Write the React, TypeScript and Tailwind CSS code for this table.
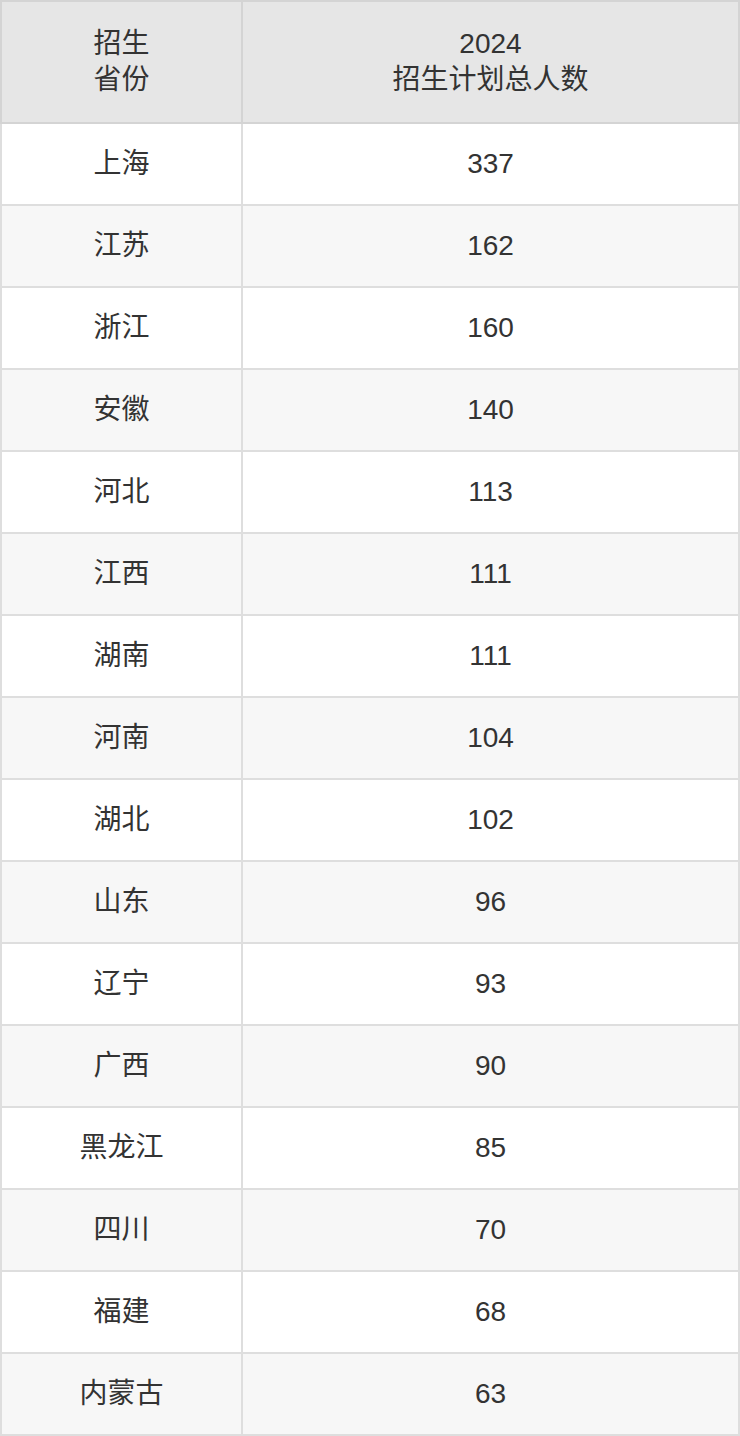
const rows: [string, number][] = [
  ["上海", 337],
  ["江苏", 162],
  ["浙江", 160],
  ["安徽", 140],
  ["河北", 113],
  ["江西", 111],
  ["湖南", 111],
  ["河南", 104],
  ["湖北", 102],
  ["山东", 96],
  ["辽宁", 93],
  ["广西", 90],
  ["黑龙江", 85],
  ["四川", 70],
  ["福建", 68],
  ["内蒙古", 63],
];

export default function App() {
  return (
    <div
      className="w-[740px] bg-white text-[#333333]"
      style={{ fontFamily: '"Liberation Sans", "Noto Sans CJK SC", sans-serif' }}
    >
      <table className="w-full border-collapse border-2 border-[#d9d9d9] text-[28px] leading-[36px]">
        <thead>
          <tr className="bg-[#e6e6e6]">
            <th className="w-[241px] h-[122px] border-2 border-[#d4d4d4] font-normal text-center align-middle">
              招生
              <br />
              省份
            </th>
            <th className="h-[122px] border-2 border-[#d4d4d4] font-normal text-center align-middle">
              2024
              <br />
              招生计划总人数
            </th>
          </tr>
        </thead>
        <tbody>
          {rows.map(([name, count], i) => (
            <tr key={name} className={i % 2 === 1 ? "bg-[#f7f7f7]" : "bg-white"}>
              <td className="h-[82px] border-2 border-[#dedede] text-center align-middle">
                {name}
              </td>
              <td className="h-[82px] border-2 border-[#dedede] text-center align-middle">
                {count}
              </td>
            </tr>
          ))}
        </tbody>
      </table>
    </div>
  );
}
